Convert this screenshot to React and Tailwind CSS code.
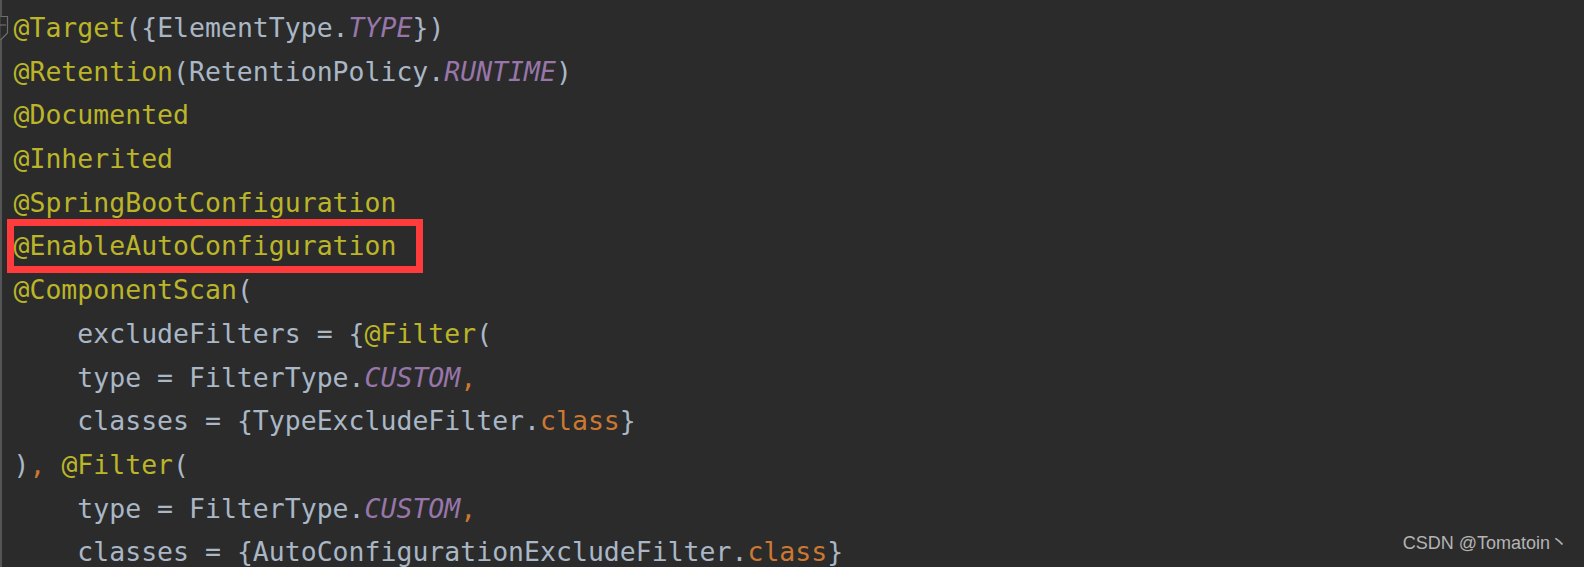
import React from 'react';

const A = ({ children }) => <span className="text-[#bbb529]">{children}</span>;
const C = ({ children }) => <span className="text-[#9876aa] italic">{children}</span>;
const K = ({ children }) => <span className="text-[#cc7832]">{children}</span>;

const lines = [
  <><A>@Target</A>({'{'}ElementType.<C>TYPE</C>{'}'})</>,
  <><A>@Retention</A>(RetentionPolicy.<C>RUNTIME</C>)</>,
  <><A>@Documented</A></>,
  <><A>@Inherited</A></>,
  <><A>@SpringBootConfiguration</A></>,
  'boxed',
  <><A>@ComponentScan</A>(</>,
  <>{'    '}excludeFilters = {'{'}<A>@Filter</A>(</>,
  <>{'    '}type = FilterType.<C>CUSTOM</C><K>,</K></>,
  <>{'    '}classes = {'{'}TypeExcludeFilter.<K>class</K>{'}'}</>,
  <>)<K>, </K><A>@Filter</A>(</>,
  <>{'    '}type = FilterType.<C>CUSTOM</C><K>,</K></>,
  <>{'    '}classes = {'{'}AutoConfigurationExcludeFilter.<K>class</K>{'}'}</>,
];

export default function App() {
  return (
    <div className="relative w-[1584px] h-[567px] overflow-hidden bg-[#2b2b2b]">
      {/* gutter */}
      <div className="absolute left-0 top-0 w-[2px] h-full bg-[#555555]" />
      <svg className="absolute left-0 top-[16px]" width="9" height="26" viewBox="0 0 9 26">
        <path d="M0.5 0.5 H7.5 V17 L0.5 24" fill="#2b2b2b" stroke="#6e6e6e" strokeWidth="1.2" />
        <path d="M0 9 H6" stroke="#6e6e6e" strokeWidth="1.2" />
      </svg>

      <div
        className="pl-[13.5px] pt-[6px] text-[26.5px] text-[#a9b7c6] whitespace-pre"
        style={{ fontFamily: '"DejaVu Sans Mono", "Liberation Mono", monospace' }}
      >
        {lines.map((l, i) =>
          l === 'boxed' ? (
            <div key={i} className="h-[43.7px] flex items-center">
              <span className="inline-block w-[402px] h-[40px] leading-[40px] outline-[7px] outline-solid outline-[#ff3b3b]">
                <A>@EnableAutoConfiguration</A>
              </span>
            </div>
          ) : (
            <div key={i} className="h-[43.7px] leading-[43.7px]">{l}</div>
          )
        )}
      </div>

      <div
        className="absolute right-[16px] bottom-[10px] text-[18px] text-[#b4b4b4]"
        style={{ fontFamily: '"Liberation Sans", "Noto Sans CJK SC", sans-serif' }}
      >
        CSDN @Tomatoin丶
      </div>
    </div>
  );
}
